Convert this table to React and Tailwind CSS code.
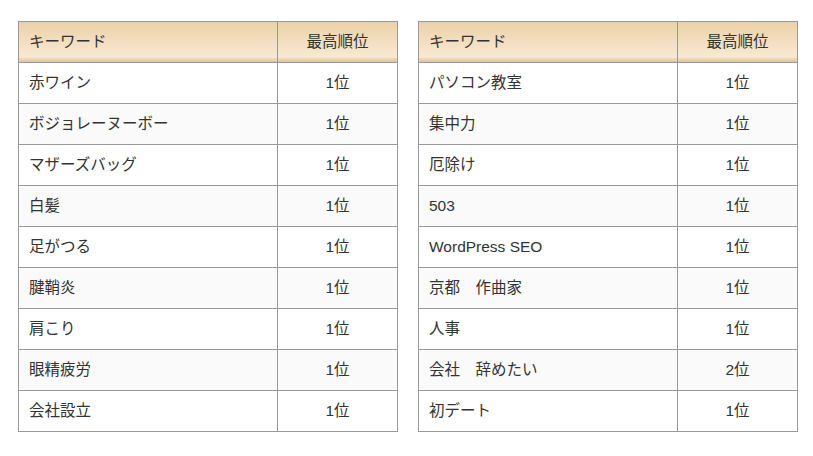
import React from 'react';

const LEFT = [
  ['赤ワイン', '1位'],
  ['ボジョレーヌーボー', '1位'],
  ['マザーズバッグ', '1位'],
  ['白髪', '1位'],
  ['足がつる', '1位'],
  ['腱鞘炎', '1位'],
  ['肩こり', '1位'],
  ['眼精疲労', '1位'],
  ['会社設立', '1位'],
];

const RIGHT = [
  ['パソコン教室', '1位'],
  ['集中力', '1位'],
  ['厄除け', '1位'],
  ['503', '1位'],
  ['WordPress SEO', '1位'],
  ['京都　作曲家', '1位'],
  ['人事', '1位'],
  ['会社　辞めたい', '2位'],
  ['初デート', '1位'],
];

const RankTable = ({ rows }) => (
  <table className="w-[380px] border-collapse border border-[#999] text-[15.5px] text-[#333]">
    <thead>
      <tr className="h-[41px] bg-[linear-gradient(to_bottom,#ebd1a8_0%,#f8e9d2_85%,#e9d3b0_92%,#d6bd96_100%)]">
        <th className="w-[259px] border border-[#999] px-[10px] text-left font-normal">キーワード</th>
        <th className="border border-[#999] text-center font-normal">最高順位</th>
      </tr>
    </thead>
    <tbody>
      {rows.map(([kw, rank], i) => (
        <tr key={kw} className={`h-[41px] ${i % 2 === 1 ? 'bg-[#fafafa]' : 'bg-white'}`}>
          <td className="border border-[#999] px-[10px]">{kw}</td>
          <td className="border border-[#999] text-center">{rank}</td>
        </tr>
      ))}
    </tbody>
  </table>
);

export default function App() {
  return (
    <div
      className="min-h-[456px] w-[813px] bg-white pl-[18px] pt-[21px]"
      style={{ fontFamily: '"Liberation Sans", "Noto Sans CJK JP", sans-serif' }}
    >
      <div className="flex gap-[20px]">
        <RankTable rows={LEFT} />
        <RankTable rows={RIGHT} />
      </div>
    </div>
  );
}
